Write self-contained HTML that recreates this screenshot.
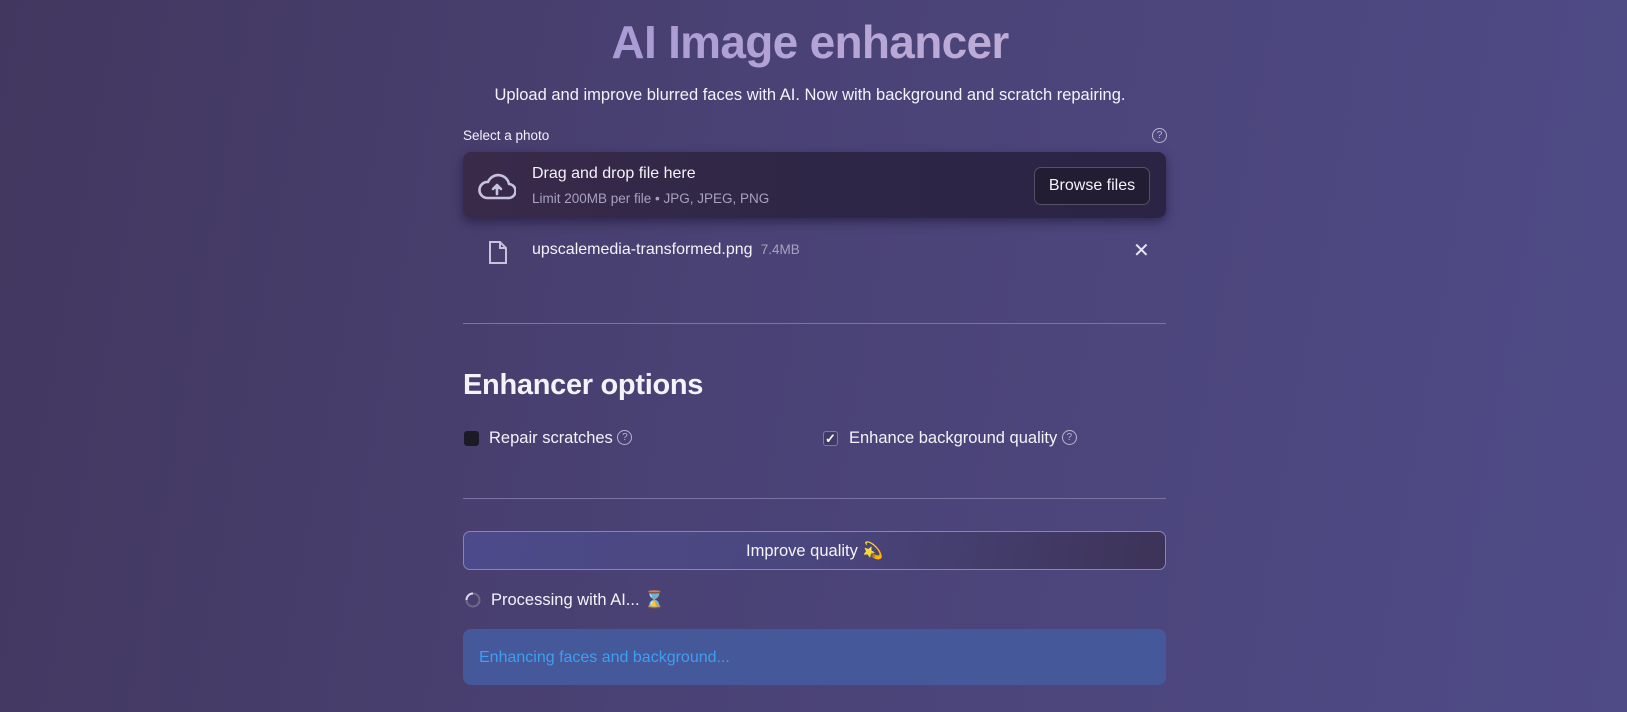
<!DOCTYPE html>
<html><head><meta charset="utf-8"><style>
*{margin:0;padding:0;box-sizing:border-box}
body{width:1627px;height:712px;overflow:hidden;font-family:"Liberation Sans",sans-serif;color:#f4f2fa;
background:linear-gradient(100deg,#42375f 0%,#4a4275 45%,#4f4b87 100%);position:relative}
.a{position:absolute}
h1{position:absolute;left:0;width:1620px;text-align:center;top:15px;font-size:46px;font-weight:bold;letter-spacing:-0.7px;
background:linear-gradient(90deg,#857fcc,#b4a4d6 50%,#dcc6da);-webkit-background-clip:text;color:transparent}
.sub{left:0;width:1620px;text-align:center;top:86px;font-size:16.5px}
.drop{left:463px;top:152px;width:703px;height:66px;border-radius:8px;background:linear-gradient(90deg,#3a2a4a,#2e2646 50%,#2b2444);box-shadow:0 4px 10px rgba(20,15,40,.5)}
.btn{left:1034px;top:166px;width:116px;height:38px;border:1px solid #555068;border-radius:7px;background:#231d33;font-size:16px;text-align:center;line-height:36px}
.hr{left:463px;width:703px;height:1px;background:#7a73a3}
.cb{width:15px;height:15px;border-radius:3px}
.q{display:inline-block;width:15px;height:15px;border:1.3px solid #b9b4d0;border-radius:50%;font-size:10px;line-height:13px;text-align:center;color:#b9b4d0;vertical-align:middle;position:relative;top:-1px}
</style></head><body>
<h1>AI Image enhancer</h1>
<div class="a sub">Upload and improve blurred faces with AI. Now with background and scratch repairing.</div>
<div class="a" style="left:463px;top:128px;font-size:13.5px">Select a photo</div>
<div class="a" style="left:1152px;top:128px"><span class="q">?</span></div>
<div class="a drop"></div>
<svg class="a" style="left:478px;top:171px" width="38" height="32" viewBox="0 0 38 32" fill="none" stroke="#c8c3dc" stroke-width="2.6" stroke-linejoin="round"><path d="M9 27h21a7 7 0 0 0 1-14 11 11 0 0 0-21-2A8 8 0 0 0 9 27z"/><path d="M19 23v-8M15 18l4-4 4 4" stroke-linecap="round" fill="#c8c3dc"/></svg>
<div class="a" style="left:532px;top:165px;font-size:16px">Drag and drop file here</div>
<div class="a" style="left:532px;top:191px;font-size:13.5px;color:#a7a2bd">Limit 200MB per file • JPG, JPEG, PNG</div>
<div class="a btn" style="top:167px">Browse files</div>
<svg class="a" style="left:488px;top:240px" width="20" height="25" viewBox="0 0 20 25" fill="none" stroke="#c8c3dc" stroke-width="2"><path d="M2 2h10l6 6v15H2z"/><path d="M12 2v6h6"/></svg>
<div class="a" style="left:532px;top:241px;font-size:16px">upscalemedia-transformed.png <span style="font-size:13.5px;color:#a7a2bd">&nbsp;7.4MB</span></div>
<div class="a" style="left:1133px;top:238px;font-size:20px;color:#e8e6f2">✕</div>
<div class="a hr" style="top:323px"></div>
<div class="a" style="left:463px;top:369px;font-size:29px;font-weight:bold;letter-spacing:-0.3px">Enhancer options</div>
<div class="a cb" style="left:464px;top:431px;background:#1c1a26"></div>
<div class="a" style="left:489px;top:429px;font-size:16.5px">Repair scratches <span class="q">?</span></div>
<div class="a cb" style="left:823px;top:431px;background:#3f3b66;border:1px solid #7d78a8;color:#fff;font-size:13px;font-weight:bold;line-height:13px;text-align:center">✓</div>
<div class="a" style="left:849px;top:429px;font-size:16.5px">Enhance background quality <span class="q">?</span></div>
<div class="a hr" style="top:498px"></div>
<div class="a" style="left:463px;top:531px;width:703px;height:39px;border:1px solid #8a84b0;border-radius:7px;background:linear-gradient(100deg,#4c4a8a,#4a467e 50%,#3d3358);text-align:center;line-height:38px;font-size:16.5px">Improve quality <span style="color:#f2b632">💫</span></div>
<svg class="a" style="left:465px;top:592px" width="16" height="16" viewBox="0 0 16 16" fill="none"><circle cx="8" cy="8" r="6.5" stroke="#6e6a8c" stroke-width="2"/><path d="M8 1.5A6.5 6.5 0 0 0 1.5 8" stroke="#e0dcef" stroke-width="2"/></svg>
<div class="a" style="left:491px;top:591px;font-size:16.5px">Processing with AI... <span style="color:#e0b070">⌛</span></div>
<div class="a" style="left:463px;top:629px;width:703px;height:56px;border-radius:8px;background:#45589a"></div>
<div class="a" style="left:479px;top:649px;font-size:16px;color:#3f9ef0">Enhancing faces and background...</div>
</body></html>
